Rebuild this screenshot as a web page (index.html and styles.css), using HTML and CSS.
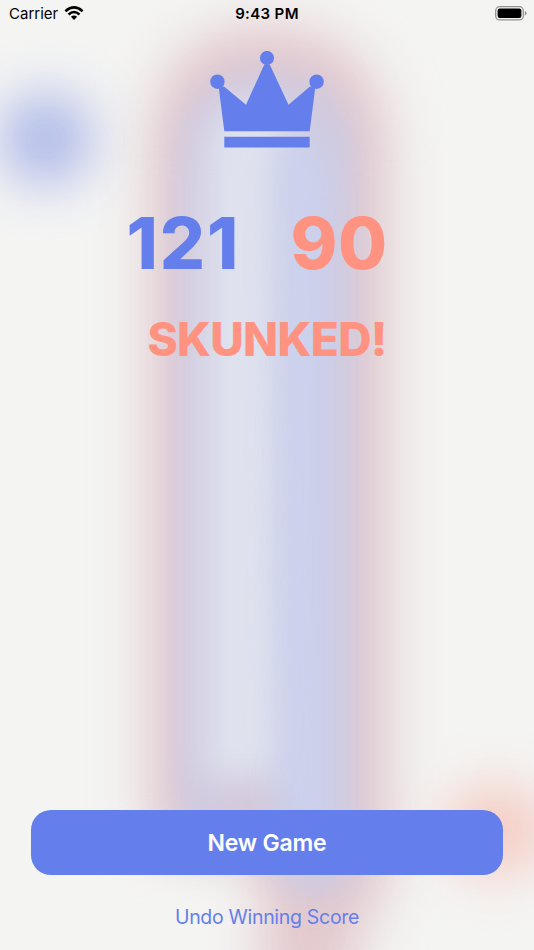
FILE: index.html
```html
<!DOCTYPE html>
<html lang="en">

<head>
    <meta charset="UTF-8">
    <meta name="viewport" content="width=device-width, initial-scale=1.0">
    <title>Cribbage - Game Over</title>
    <link rel="stylesheet" href="styles.css">
</head>

<body>

    <!-- Blurred board behind the results -->
    <svg class="board" viewBox="0 0 534 950" aria-hidden="true">
        <defs>
            <filter id="soft" x="-200" y="-200" width="934" height="1350" filterUnits="userSpaceOnUse" color-interpolation-filters="sRGB">
                <feGaussianBlur stdDeviation="17" />
            </filter>
            <filter id="softer" x="-200" y="-200" width="934" height="1350" filterUnits="userSpaceOnUse" color-interpolation-filters="sRGB">
                <feGaussianBlur stdDeviation="26" />
            </filter>
        </defs>
        <path class="track-red" filter="url(#softer)" d="M149 845V145Q155 26 267 26T390 145V870Q380 910 355 940V1000H262V870L220 850Z" />
        <path class="track-mid" filter="url(#soft)" d="M177 855V160Q180 70 267 70T357 160V870Q345 895 310 897Q280 893 270 855Z" />
        <path class="track-light" filter="url(#soft)" d="M205 780V170Q207 100 252 100T288 160V780Z" />
        <path class="track-blue" filter="url(#soft)" d="M276 170Q276 135 300 135T328 180V865H280Z" />
        <ellipse class="peg-pink" filter="url(#soft)" cx="243" cy="814" rx="22" ry="32" />
        <ellipse class="peg-blue" filter="url(#softer)" cx="46" cy="139" rx="48" ry="46" />
        <ellipse class="peg-red" filter="url(#softer)" cx="496" cy="830" rx="54" ry="46" />
    </svg>

    <div class="screen">
        <header class="status-bar">
            <div class="carrier">
                <span>Carrier</span>
                <svg class="wifi" viewBox="0 0 20 15">
                    <path d="M1.4 5.2Q10-2.4 18.6 5.2" />
                    <path d="M4.5 8.4Q10 3.6 15.5 8.4" />
                    <path class="wifi-dot" d="M6.9 10.8Q10 8.2 13.1 10.8L10 14Z" />
                </svg>
            </div>
            <div class="time">9:43 PM</div>
            <svg class="battery" viewBox="0 0 32 15">
                <rect class="battery-case" x=".7" y=".7" width="27.6" height="13.2" rx="4" />
                <rect x="2.6" y="2.6" width="23.8" height="9.4" rx="2.2" />
                <path class="battery-cap" d="M29.9 5Q31.5 5.6 31.5 7.3T29.9 9.6Z" />
            </svg>
        </header>

        <main class="results">
            <svg class="crown" viewBox="0 0 114 97">
                <circle cx="57" cy="7" r="7.1" />
                <circle cx="7.4" cy="30.7" r="7.2" />
                <circle cx="106.6" cy="30.7" r="7.2" />
                <path d="M8.7 36L14 35.5 36 53.7 54.3 13.5H59.7L78.5 53.7 100 35.5 105.3 36 99.7 80.2H14.3Z" />
                <path d="M14.3 85.7H99.7V96.4H14.3Z" />
            </svg>
            <div class="scores">
                <span class="winner">121</span>
                <span class="loser">90</span>
            </div>
            <h1 class="skunked">SKUNKED!</h1>
        </main>

        <div class="actions">
            <button class="new-game">New Game</button>
            <button class="undo">Undo Winning Score</button>
        </div>
    </div>

</body>

</html>
```

FILE: styles.css
```css
body {
    margin: 0;
    height: 950px;
    overflow: hidden;
    background-color: #f4f4f3;
    font-family: Inter, "Liberation Sans", sans-serif;
}

.board {
    position: absolute;
    top: 0;
    left: 0;
    width: 534px;
    height: 950px;
}

.track-red {
    fill: #e2c8cd;
}

.track-mid {
    fill: #cfcbe1;
}

.track-light {
    fill: #dfe2ee;
}

.track-blue {
    fill: #cbd1ed;
}

.peg-pink {
    fill: #dfc8d3;
    opacity: .6;
}

.peg-blue {
    fill: #a9b5e8;
    opacity: .9;
}

.peg-red {
    fill: #f5c6bc;
    opacity: .85;
}

.screen {
    position: relative;
    display: flex;
    flex-direction: column;
    height: 950px;
}

.status-bar {
    display: grid;
    grid-template-columns: 1fr auto 1fr;
    align-items: center;
    height: 27px;
    padding: 0 7px 0 9px;
    box-sizing: border-box;
    font-size: 15px;
}

.carrier {
    display: flex;
    align-items: center;
    gap: 6px;
}

.wifi {
    width: 20px;
    height: 15px;
    fill: none;
    stroke: #000;
    stroke-width: 2.6;
}

.wifi-dot {
    fill: #000;
    stroke: none;
}

.time {
    margin-right: 2px;
    font-weight: 600;
    letter-spacing: .35px;
}

.battery {
    justify-self: end;
    width: 32px;
    height: 15px;
}

.battery-case {
    fill: none;
    stroke: #929192;
    stroke-width: 1.3;
}

.battery-cap {
    fill: #929192;
}

.results {
    display: flex;
    flex: 1;
    flex-direction: column;
    align-items: center;
}

.crown {
    width: 114px;
    height: 97px;
    margin-top: 24px;
    fill: #647feb;
}

.scores {
    display: flex;
    gap: 50px;
    margin: 51px 0 0 -20px;
    font-size: 71px;
    font-weight: 800;
    line-height: 88px;
}

.winner {
    color: #647feb;
    letter-spacing: 2px;
}

.loser,
.skunked {
    color: #ff9280;
}

.loser {
    letter-spacing: .5px;
}

.skunked {
    margin: 24px 0 0;
    font-size: 46px;
    font-weight: 800;
    letter-spacing: -.7px;
    line-height: 56px;
}

.actions {
    display: flex;
    flex-direction: column;
    padding: 0 31px 16px;
}

.actions button {
    border: none;
    font-family: inherit;
}

.new-game {
    height: 65px;
    border-radius: 20px;
    background-color: #647feb;
    color: #fff;
    font-size: 23px;
    font-weight: 600;
    letter-spacing: -.2px;
}

.undo {
    height: 34px;
    margin-top: 25px;
    padding: 0;
    background: none;
    color: #647feb;
    font-size: 19.5px;
    letter-spacing: -.3px;
}
```
